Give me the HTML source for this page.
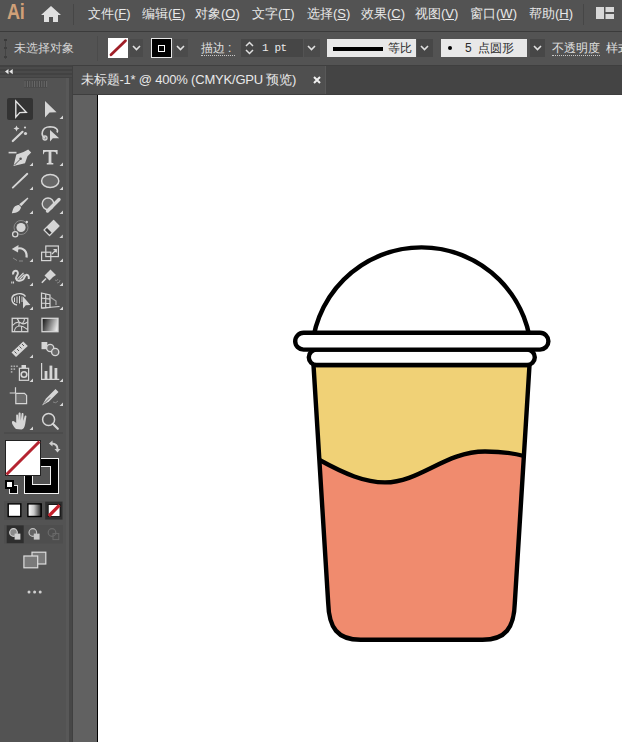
<!DOCTYPE html>
<html><head><meta charset="utf-8">
<style>
*{margin:0;padding:0;box-sizing:border-box}
html,body{width:622px;height:742px;overflow:hidden;background:#535353;font-family:"Liberation Sans",sans-serif;color:#e6e6e6}
.a{position:absolute}
#menubar{left:0;top:0;width:622px;height:31px;background:#535353}
#menuline{left:0;top:31px;width:622px;height:1px;background:#3b3b3b}
#ctrl{left:0;top:32px;width:622px;height:33px;background:#535353}
.mi{position:absolute;top:6px;font-size:13px;line-height:15px;color:#e8e8e8;white-space:nowrap}
.mi u{text-decoration:underline;text-underline-offset:1px}
#tabrow{left:326px;top:65px;width:296px;height:29px;background:#444444}
#tab{left:73px;top:65px;width:253px;height:29px;background:#4f4f4f}
#tabline{left:73px;top:94px;width:549px;height:1px;background:#3e3e3e}
#toolhdr{left:0;top:65px;width:72px;height:13px;background:repeating-linear-gradient(#424242 0 2px,#4a4a4a 2px 4px)}
#tools{left:0;top:78px;width:66px;height:664px;background:#535353}
#pbL{left:66px;top:78px;width:3px;height:664px;background:#585858}
#pbD{left:69px;top:78px;width:3px;height:664px;background:#474747}
#vline{left:72px;top:65px;width:1px;height:677px;background:#404040}
#paste{left:73px;top:95px;width:24px;height:647px;background:#616161}
#cvline{left:97px;top:95px;width:1px;height:647px;background:#000}
#canvas{left:98px;top:95px;width:524px;height:647px;background:#fff}
</style></head><body>
<div id="menubar" class="a"></div>
<div id="menuline" class="a"></div>
<div id="ctrl" class="a"></div>
<!-- Ai logo -->
<div class="a" style="left:6.5px;top:0px;font-size:22px;line-height:23px;color:#d0a078;font-weight:bold;letter-spacing:-0.3px;transform:scaleX(0.82);transform-origin:0 0">Ai</div>
<!-- home -->
<svg class="a" style="left:40px;top:5px" width="22" height="18" viewBox="0 0 22 18"><path d="M11 1 L21 10 L18 10 L18 17 L13 17 L13 12 L9 12 L9 17 L4 17 L4 10 L1 10 Z" fill="#e0e0e0"/></svg>
<div class="a" style="left:73px;top:4px;width:1px;height:21px;background:#464646"></div>
<div class="mi" style="left:88px">文件(<u>F</u>)</div>
<div class="mi" style="left:142px">编辑(<u>E</u>)</div>
<div class="mi" style="left:195px">对象(<u>O</u>)</div>
<div class="mi" style="left:252px">文字(<u>T</u>)</div>
<div class="mi" style="left:307px">选择(<u>S</u>)</div>
<div class="mi" style="left:361px">效果(<u>C</u>)</div>
<div class="mi" style="left:415px">视图(<u>V</u>)</div>
<div class="mi" style="left:470px">窗口(<u>W</u>)</div>
<div class="mi" style="left:529px">帮助(<u>H</u>)</div>
<div class="a" style="left:583px;top:4px;width:1px;height:21px;background:#464646"></div>
<svg class="a" style="left:595.5px;top:6.5px" width="19" height="13"><rect x="0" y="0" width="8" height="12" fill="#d8d8d8"/><rect x="9.5" y="0" width="8.5" height="5" fill="#d8d8d8"/><rect x="9.5" y="7" width="8.5" height="5" fill="#d8d8d8"/></svg>


<!-- control bar -->
<div class="a" style="left:4.5px;top:39px;width:1.5px;height:20px;background:#444"></div><div class="a" style="left:4px;top:39px;width:3px;height:2px;background:#3a3a3a"></div><div class="a" style="left:4px;top:47px;width:3px;height:1.5px;background:#3e3e3e"></div><div class="a" style="left:4px;top:56px;width:3px;height:2px;background:#3e3e3e"></div>
<div class="a" style="left:14px;top:41px;font-size:12px;line-height:14px;color:#d4d4d4">未选择对象</div>
<div class="a" style="left:97px;top:36px;width:1px;height:25px;background:#4b4b4b"></div>
<div class="a" style="left:108px;top:38px;width:20px;height:20px;background:#fff;overflow:hidden"><svg width="20" height="20"><line x1="3" y1="16.8" x2="17.5" y2="2.8" stroke="#a01f28" stroke-width="2.8" stroke-linecap="round"/></svg></div>
<div class="a" style="left:130px;top:39px;width:13px;height:18px;background:#4b4b4b"></div>
<svg class="a" style="left:131px;top:43px" width="11" height="10"><path d="M2 3 L5.5 6.5 L9 3" fill="none" stroke="#e0e0e0" stroke-width="1.6"/></svg>
<div class="a" style="left:151px;top:38px;width:21px;height:20px;background:#000;border:1px solid #e6e6e6"></div>
<div class="a" style="left:158px;top:44.5px;width:7px;height:7px;border:1.5px solid #fff;background:#000"></div>
<div class="a" style="left:174px;top:39px;width:14px;height:18px;background:#4b4b4b"></div>
<svg class="a" style="left:175px;top:43px" width="11" height="10"><path d="M2 3 L5.5 6.5 L9 3" fill="none" stroke="#e0e0e0" stroke-width="1.6"/></svg>
<div class="a" style="left:201px;top:41px;font-size:12px;line-height:14px;color:#e0e0e0;white-space:nowrap">描边<span style="margin-left:3px">:</span></div>
<div class="a" style="left:201px;top:55px;width:34px;height:1px;border-top:1px dotted #c8c8c8"></div>
<div class="a" style="left:241px;top:39px;width:17px;height:18px;background:#474747"></div>
<svg class="a" style="left:243px;top:39px" width="13" height="18"><path d="M3 7 L6.5 3.5 L10 7 M3 11 L6.5 14.5 L10 11" fill="none" stroke="#e0e0e0" stroke-width="1.5"/></svg>
<div class="a" style="left:258px;top:39px;width:45px;height:18px;background:#464646"></div>
<div class="a" style="left:262px;top:41px;font-family:'Liberation Mono',monospace;font-size:11px;line-height:14px;color:#eaeaea;letter-spacing:-0.4px">1 pt</div>
<div class="a" style="left:304px;top:39px;width:16px;height:18px;background:#4b4b4b"></div>
<svg class="a" style="left:306px;top:43px" width="11" height="10"><path d="M2 3 L5.5 6.5 L9 3" fill="none" stroke="#e0e0e0" stroke-width="1.6"/></svg>
<div class="a" style="left:327px;top:39px;width:89px;height:18px;background:#e8e8e8"></div>
<div class="a" style="left:333px;top:47px;width:50px;height:4px;background:#000"></div>
<div class="a" style="left:388px;top:41px;font-size:12px;line-height:14px;color:#2a2a2a">等比</div>
<div class="a" style="left:417px;top:39px;width:16px;height:18px;background:#474747"></div>
<svg class="a" style="left:419px;top:43px" width="11" height="10"><path d="M2 3 L5.5 6.5 L9 3" fill="none" stroke="#e0e0e0" stroke-width="1.6"/></svg>
<div class="a" style="left:441px;top:39px;width:86px;height:18px;background:#e8e8e8"></div>
<div class="a" style="left:447.5px;top:46px;width:4px;height:4px;border-radius:50%;background:#000"></div>
<div class="a" style="left:465px;top:41px;font-size:12px;line-height:14px;color:#2a2a2a">5&nbsp;&nbsp;点圆形</div>
<div class="a" style="left:530px;top:39px;width:15px;height:18px;background:#474747"></div>
<svg class="a" style="left:532px;top:43px" width="11" height="10"><path d="M2 3 L5.5 6.5 L9 3" fill="none" stroke="#e0e0e0" stroke-width="1.6"/></svg>
<div class="a" style="left:552px;top:41px;font-size:12px;line-height:14px;color:#e0e0e0;white-space:nowrap">不透明度</div>
<div class="a" style="left:552px;top:55px;width:48px;height:1px;border-top:1px dotted #c8c8c8"></div>
<div class="a" style="left:606px;top:41px;font-size:12px;line-height:14px;color:#e0e0e0;white-space:nowrap">样式</div>
<div id="tabrow" class="a"></div>
<div id="tab" class="a"></div>
<div class="a" style="left:81px;top:72px;font-size:13px;line-height:15px;color:#e8e8e8;white-space:nowrap;letter-spacing:-0.2px">未标题-1* @ 400% (CMYK/GPU 预览)</div>
<svg class="a" style="left:313px;top:76px" width="8" height="8"><path d="M1 1 L7 7 M7 1 L1 7" stroke="#f0f0f0" stroke-width="2"/></svg>

<div id="toolhdr" class="a"></div>
<div id="tools" class="a"></div>
<div id="pbL" class="a"></div>
<div id="pbD" class="a"></div>
<div id="vline" class="a"></div>
<div id="tabline" class="a"></div>
<div class="a" style="left:73px;top:65px;width:549px;height:1px;background:#3f3f3f"></div>
<div class="a" style="left:325px;top:66px;width:1px;height:28px;background:#585858"></div>
<div id="paste" class="a"></div>

<svg class="a" style="left:0;top:0" width="72" height="742" viewBox="0 0 72 742">
<!-- header -->
<path d="M5,71.5 L8.5,69 L8.5,74.2 Z M9.2,71.5 L12.7,69 L12.7,74.2 Z" fill="#e8e8e8"/>
<rect x="24" y="80.5" width="23" height="7" fill="#474747"/><g stroke="#6c6c6c" stroke-width="1"><line x1="25.0" y1="81" x2="25.0" y2="87"/><line x1="27.4" y1="81" x2="27.4" y2="87"/><line x1="29.8" y1="81" x2="29.8" y2="87"/><line x1="32.2" y1="81" x2="32.2" y2="87"/><line x1="34.6" y1="81" x2="34.6" y2="87"/><line x1="37.0" y1="81" x2="37.0" y2="87"/><line x1="39.4" y1="81" x2="39.4" y2="87"/><line x1="41.8" y1="81" x2="41.8" y2="87"/><line x1="44.2" y1="81" x2="44.2" y2="87"/><line x1="46.6" y1="81" x2="46.6" y2="87"/></g>
<!-- selected bg -->
<rect x="7" y="98" width="26" height="22" rx="2" fill="#333333"/>
<!-- selection -->
<path d="M15.8,101 L15.8,117.2 L19.8,112.6 L26.3,112.3 Z" fill="none" stroke="#e2e2e2" stroke-width="1.4" stroke-linejoin="miter"/>
<!-- direct selection -->
<path d="M45,101 L45,117.5 L49.5,112.6 L56.6,112.3 Z" fill="#d6d6d6"/>
<path d="M63,115.5 L63,119 L59.5,119 Z" fill="#d6d6d6"/>
<!-- magic wand -->
<line x1="12.8" y1="141" x2="22.5" y2="131.8" stroke="#d6d6d6" stroke-width="2.2" stroke-linecap="round"/>
<path d="M16.5,125.5 L17.4,127.6 L19.5,128.5 L17.4,129.4 L16.5,131.5 L15.6,129.4 L13.5,128.5 L15.6,127.6 Z" fill="#d6d6d6"/>
<circle cx="25.5" cy="133.5" r="1.6" fill="#d6d6d6"/><circle cx="25" cy="127.5" r="1.1" fill="#d6d6d6"/>
<!-- lasso -->
<path d="M45.5,138.5 C40,135.5 41.5,127 50,126.8 C56.5,126.8 58.5,130 57,132.5" fill="none" stroke="#d6d6d6" stroke-width="1.6"/>
<circle cx="45" cy="138" r="2" fill="none" stroke="#d6d6d6" stroke-width="1.3"/>
<path d="M50,130 L50,141.5 L52.8,138.3 L59.2,138.2 Z" fill="#d6d6d6"/>
<!-- pen -->
<line x1="8.6" y1="152.6" x2="16.5" y2="152.6" stroke="#d6d6d6" stroke-width="1.6"/>
<path d="M28.2,149.5 L31.2,152.5 L27.5,156.2 L25,163.2 L13.5,166 L16.3,154.5 L23.5,152 Z" fill="#d6d6d6"/>
<path d="M14.5,165 L20,159.5" stroke="#535353" stroke-width="1"/><circle cx="20.6" cy="158.8" r="1.3" fill="#535353"/>
<path d="M33,162.5 L33,166 L29.5,166 Z" fill="#d6d6d6"/>
<!-- type -->
<path d="M43,150 H57.6 V154.2 H56.4 Q56.2,151.8 54,151.8 H51.4 V162.4 Q51.4,163 53.3,163 V164.4 H46.8 V163 Q48.6,163 48.6,162.4 V151.8 H46 Q43.8,151.8 43.6,154.2 H43 Z" fill="#d6d6d6"/>
<path d="M63,162.5 L63,166 L59.5,166 Z" fill="#d6d6d6"/>
<!-- line -->
<line x1="12.8" y1="187.6" x2="27.3" y2="173.8" stroke="#d6d6d6" stroke-width="1.9" stroke-linecap="round"/>
<path d="M33,186.5 L33,190 L29.5,190 Z" fill="#d6d6d6"/>
<!-- ellipse -->
<ellipse cx="50.2" cy="181" rx="8.6" ry="6.6" fill="#676767" stroke="#d6d6d6" stroke-width="1.5"/>
<path d="M63,186.5 L63,190 L59.5,190 Z" fill="#d6d6d6"/>
<!-- paintbrush -->
<path d="M27.6,197.5 L28.4,198.4 L21.3,206.2 L19.2,204.2 Z" fill="#d6d6d6"/>
<path d="M19,205 L21,207 C20.5,211 17,213.3 11.8,213.2 C12.8,211 12.8,207.8 15,206.3 C16.5,205.3 18,205 19,205 Z" fill="#d6d6d6"/>
<path d="M33,210.5 L33,214 L29.5,214 Z" fill="#d6d6d6"/>
<!-- blob brush -->
<circle cx="48" cy="203.8" r="5.8" fill="#686868" stroke="#d6d6d6" stroke-width="1.4"/>
<line x1="47.5" y1="211" x2="59" y2="199.5" stroke="#d6d6d6" stroke-width="3.4" stroke-linecap="round"/>
<path d="M63,210.5 L63,214 L59.5,214 Z" fill="#d6d6d6"/>
<!-- shaper -->
<circle cx="21" cy="227.5" r="7" fill="none" stroke="#8a8a8a" stroke-width="1"/>
<circle cx="21" cy="227.5" r="4.6" fill="#d6d6d6"/>
<circle cx="15.2" cy="234.2" r="2.6" fill="#535353" stroke="#d6d6d6" stroke-width="1.3"/>
<circle cx="26.8" cy="222" r="1.2" fill="#d6d6d6"/>
<!-- eraser -->
<path d="M53.6,220.5 L59,226 L49.5,235.5 L44,230 Z" fill="#3e3e3e" stroke="#d6d6d6" stroke-width="1.2" stroke-linejoin="round"/>
<path d="M53.6,220.5 L59,226 L52,233 L46.5,227.5 Z" fill="#d6d6d6"/>
<path d="M62.8,234.5 L62.8,238 L59.3,238 Z" fill="#d6d6d6"/>
<!-- rotate -->
<path d="M16,249.5 C20.5,246.5 27.5,249.5 26.5,257.5" fill="none" stroke="#d6d6d6" stroke-width="2.2"/>
<path d="M11.8,249 L18.5,245 L18,252.5 Z" fill="#d6d6d6"/>
<path d="M13,258 L17,260.5 M19,261 L23,261" stroke="#8a8a8a" stroke-width="1"/>
<path d="M33,258.5 L33,262 L29.5,262 Z" fill="#d6d6d6"/>
<!-- scale -->
<rect x="45.8" y="246" width="12.6" height="10.6" fill="none" stroke="#d6d6d6" stroke-width="1.2"/>
<rect x="41.6" y="252.2" width="9.2" height="8.4" fill="none" stroke="#d6d6d6" stroke-width="1.2"/>
<path d="M52,254 L56,250 M53.5,249.6 L56.3,249.6 L56.3,252.4" fill="none" stroke="#d6d6d6" stroke-width="1.2"/>
<path d="M63,258.5 L63,262 L59.5,262 Z" fill="#d6d6d6"/>
<!-- warp -->
<path d="M13.2,274.5 C12.5,271 16.5,269.5 17.8,272.3 C18.8,274.5 15.5,276.5 16,278.5 C16.5,281 20.5,281.5 23,279.5 C25,277.8 24.5,275 26.5,274.8 C28.3,274.6 29,276.5 28.8,279" fill="none" stroke="#d6d6d6" stroke-width="2"/>
<path d="M17.5,278.8 L23.5,272.8 M19.5,279.5 L24.5,274.5" stroke="#d6d6d6" stroke-width="1.2"/>
<path d="M11.8,281.5 L11.8,283.5 M13.5,281.5 L13.5,283.5" stroke="#d6d6d6" stroke-width="1.1"/>
<path d="M33,286 L33,282.5 L29.5,286 Z" fill="#d6d6d6"/>
<!-- puppet pin -->
<path d="M50.5,269.5 L56,275 L53,277 L49.5,280.5 L44.5,275.5 L48,272 Z" fill="#d6d6d6"/>
<line x1="46" y1="278.5" x2="41.8" y2="282.7" stroke="#d6d6d6" stroke-width="1.6"/>
<path d="M55,280 Q57,282 58,279 M57,283 Q60,283 60,280" fill="none" stroke="#8a8a8a" stroke-width="0.9"/>
<path d="M63,282.5 L63,286 L59.5,286 Z" fill="#d6d6d6"/>
<!-- free transform -->
<path d="M17,305 C11,304 10,296 15.5,294.5 C19,293 23.5,293.5 25.5,296.5" fill="none" stroke="#d6d6d6" stroke-width="1.4"/>
<path d="M14.5,297.5 L14.5,302 M17,296.5 L17,303 M19.5,296 L19.5,303.5 M22,296.5 L22,302" stroke="#d6d6d6" stroke-width="1"/>
<path d="M23,296.5 L23,308.6 L25.8,305.3 L30.4,305 Z" fill="#d6d6d6"/>
<path d="M33,306.5 L33,310 L29.5,310 Z" fill="#d6d6d6"/>
<!-- perspective grid -->
<path d="M41.5,293 L50,295 L50,307.5 L41.5,308 Z M41.5,298 L50,299.2 M41.5,303 L50,303.5 M45.7,294 L45.7,307.7" fill="none" stroke="#d6d6d6" stroke-width="1.2"/>
<path d="M50,297 L56,301 L56,305" fill="none" stroke="#a8a8a8" stroke-width="1.2"/>
<path d="M42,308 L59.5,306.5" stroke="#d6d6d6" stroke-width="1.2"/>
<path d="M63,306.5 L63,310 L59.5,310 Z" fill="#d6d6d6"/>
<!-- mesh -->
<rect x="12.2" y="318.3" width="15.6" height="13.4" fill="none" stroke="#d6d6d6" stroke-width="1.3"/>
<path d="M12.5,325.5 C15.5,322 18.5,321.5 21,323 C23,324.5 25,324 27.5,322 M14.5,331.5 C14.5,328 17,326 20,326 C23,326 25.5,328 27.5,329.5 M17,318.5 C19.5,321 19.5,324 18.5,326.5 M21.5,326 C21.5,328.5 22,330 21.5,331.5 M24.5,318.5 C24.5,320.5 23.5,322.5 22.5,323.5" fill="none" stroke="#d6d6d6" stroke-width="1.1"/>
<!-- gradient -->
<defs><linearGradient id="gr" x1="0" y1="0.2" x2="1" y2="0.5"><stop offset="0" stop-color="#151515"/><stop offset="1" stop-color="#e6e6e6"/></linearGradient>
<linearGradient id="gr2" x1="0" y1="0" x2="1" y2="0"><stop offset="0" stop-color="#ffffff"/><stop offset="0.45" stop-color="#c9c9c9"/><stop offset="1" stop-color="#1e1e1e"/></linearGradient></defs>
<rect x="42" y="318.3" width="16" height="13.4" fill="url(#gr)" stroke="#d6d6d6" stroke-width="1.3"/>
<!-- measure -->
<path d="M23.2,341.5 L27.8,346 L16,357 L11.5,352.5 Z" fill="#d6d6d6"/>
<path d="M14.5,351.5 L16.5,353.5 M17,349 L19,351 M19.5,346.5 L21.5,348.5 M22,344 L24,346" stroke="#535353" stroke-width="1"/>
<path d="M33,354.5 L33,358 L29.5,358 Z" fill="#d6d6d6"/>
<!-- blend -->
<rect x="41.5" y="342" width="5.8" height="7.2" fill="#d6d6d6"/>
<circle cx="50.2" cy="348" r="3.6" fill="#6a6a6a" stroke="#d6d6d6" stroke-width="1.4"/>
<circle cx="55.2" cy="352" r="3.6" fill="#6a6a6a" stroke="#d6d6d6" stroke-width="1.4"/>
<!-- symbol sprayer -->
<g fill="#b0b0b0"><rect x="10.8" y="365.5" width="1.6" height="1.6"/><rect x="13.5" y="365.5" width="1.6" height="1.6"/><rect x="16.2" y="365.5" width="1.6" height="1.6"/><rect x="10.8" y="368.3" width="1.6" height="1.6"/><rect x="13.5" y="368.3" width="1.6" height="1.6"/><rect x="10.8" y="371.1" width="1.6" height="1.6"/></g>
<rect x="21.5" y="365" width="4.5" height="3" fill="#d6d6d6"/>
<rect x="19.4" y="368.3" width="9.2" height="12" fill="none" stroke="#d6d6d6" stroke-width="1.2"/>
<circle cx="24" cy="374.5" r="2.8" fill="none" stroke="#d6d6d6" stroke-width="1.6"/>
<path d="M33,378.5 L33,382 L29.5,382 Z" fill="#d6d6d6"/>
<!-- column graph -->
<path d="M41.6,363 L41.6,379.4 L59.3,379.4" fill="none" stroke="#d6d6d6" stroke-width="1.2"/>
<rect x="44.6" y="371" width="2.8" height="8" fill="#d6d6d6"/><rect x="49.5" y="365.6" width="2.8" height="13.4" fill="#d6d6d6"/><rect x="54.5" y="368" width="2.8" height="11" fill="#d6d6d6"/>
<path d="M63,378.5 L63,382 L59.5,382 Z" fill="#d6d6d6"/>
<!-- artboard -->
<path d="M15.5,387.3 L15.5,393 M9.7,393 L15.5,393" stroke="#d6d6d6" stroke-width="1.2"/>
<path d="M15.8,393.3 L24.5,393.3 L26.6,395.4 L26.6,403.6 L15.8,403.6 Z" fill="#6c6c6c" stroke="#d6d6d6" stroke-width="1.2"/>
<!-- slice / knife -->
<path d="M55.5,389 L58.5,392 L49,401.5 L42,405.5 L46,398.5 Z" fill="#d6d6d6"/>
<path d="M44,403.5 L50,397.5" stroke="#535353" stroke-width="0.9"/>
<path d="M53,402 Q56,404 58,401" fill="none" stroke="#8a8a8a" stroke-width="0.9"/>
<path d="M63,402.5 L63,406 L59.5,406 Z" fill="#d6d6d6"/>
<!-- hand -->
<path d="M16,429 C13.5,426.5 11,423 12.3,421.3 C13.4,420.3 15,421.8 16.2,423 L16.2,415.5 C16.2,414.2 18,414.2 18,415.5 L18,420.5 L18.6,413.5 C18.6,412.2 20.6,412.2 20.6,413.5 L20.8,420.5 L21.6,414 C21.6,412.8 23.5,412.8 23.5,414 L23.3,421 L24.6,416.2 C24.8,415 26.5,415.2 26.4,416.5 L25.2,424 C24.6,427.5 23.5,429.4 21.5,429.4 Z" fill="#d6d6d6"/>
<path d="M33,426.5 L33,430 L29.5,430 Z" fill="#d6d6d6"/>
<!-- zoom -->
<circle cx="48.6" cy="419.5" r="6" fill="none" stroke="#d6d6d6" stroke-width="1.5"/>
<line x1="52.8" y1="423.8" x2="57.8" y2="428.8" stroke="#d6d6d6" stroke-width="2.2" stroke-linecap="round"/>
<!-- separator -->
<line x1="4" y1="433" x2="63" y2="433" stroke="#474747" stroke-width="1"/>
<!-- fill/stroke -->
<g shape-rendering="crispEdges">
<rect x="24" y="458" width="35" height="36" fill="#f2f2f2"/>
<rect x="25" y="459" width="33" height="34" fill="#000"/>
<rect x="32" y="466" width="19" height="19" fill="#f2f2f2"/>
<rect x="33" y="467" width="17" height="17" fill="#535353"/>
<rect x="5" y="440" width="36" height="36" fill="#222"/>
<rect x="6" y="441" width="34" height="34" fill="#ffffff"/>
</g>
<line x1="6.5" y1="474.5" x2="39.5" y2="441.5" stroke="#b52430" stroke-width="3"/>
<!-- swap -->
<path d="M51.5,443.5 C55.5,443.5 57.5,446 57.5,449" fill="none" stroke="#cfcfcf" stroke-width="2"/>
<path d="M49,443.5 L52.5,440.5 L52.5,446.5 Z M57.5,452.5 L54.5,449 L60.5,449 Z" fill="#cfcfcf"/>
<!-- default -->
<g shape-rendering="crispEdges"><rect x="9" y="485" width="8" height="8" fill="#000" stroke="#e6e6e6" stroke-width="1"/>
<rect x="6" y="481" width="7" height="7" fill="#fff" stroke="#000" stroke-width="1.5"/></g>
<!-- color mode row -->
<rect x="4" y="501" width="59" height="19" fill="#4e4e4e"/>
<rect x="45.2" y="501.7" width="17.2" height="17.8" fill="#2e2e2e"/>
<rect x="8.2" y="503.9" width="12.6" height="12.6" fill="#fff" stroke="#000" stroke-width="1.4"/>
<rect x="27.9" y="503.9" width="13.3" height="12.6" fill="url(#gr2)" stroke="#000" stroke-width="1.4"/>
<rect x="48.2" y="504.6" width="11.8" height="11.9" fill="#fff" stroke="#000" stroke-width="0.8"/>
<line x1="48.8" y1="516" x2="59.5" y2="505.2" stroke="#c41f2a" stroke-width="3.2"/>
<!-- draw modes row -->
<rect x="4" y="525" width="59" height="18.5" fill="#4e4e4e"/>
<rect x="6.7" y="525.4" width="17" height="17.8" fill="#2e2e2e"/>
<circle cx="13.5" cy="532.5" r="3.8" fill="#8a8a8a" stroke="#d0d0d0" stroke-width="1.2"/>
<rect x="14.6" y="533.6" width="5.8" height="6" fill="#d0d0d0"/>
<circle cx="32.8" cy="532.5" r="3.8" fill="#646464" stroke="#c0c0c0" stroke-width="1.2"/>
<rect x="33.8" y="533.6" width="5.8" height="6" fill="#c8c8c8"/>
<circle cx="52" cy="532.5" r="3.8" fill="none" stroke="#6a6a6a" stroke-width="1.2"/>
<rect x="53" y="533.6" width="5.8" height="6" fill="none" stroke="#6a6a6a" stroke-width="1"/>
<!-- screen mode -->
<rect x="32" y="552.2" width="13.8" height="11.8" fill="#7a7a7a" stroke="#dcdcdc" stroke-width="1.2"/>
<rect x="23.9" y="556" width="13.8" height="11.8" fill="#7a7a7a" stroke="#dcdcdc" stroke-width="1.2"/>
<!-- more -->
<circle cx="29" cy="592" r="1.5" fill="#d0d0d0"/><circle cx="34.6" cy="592" r="1.5" fill="#d0d0d0"/><circle cx="40.2" cy="592" r="1.5" fill="#d0d0d0"/>
</svg>
<div id="cvline" class="a"></div>
<div id="canvas" class="a"></div>


<svg class="a" style="left:0;top:0" width="622" height="742" viewBox="0 0 622 742">
<defs><clipPath id="bc"><path d="M313.50,365 L328.20,603 C328.90,628 337.50,639.8 360.50,639.8 L482.50,639.8 C505.50,639.8 514.10,628 514.80,603 L529.50,365 Z"/></clipPath></defs>
<path d="M311.5,357.4 A110,110 0 0 1 531.5,357.4 Z" fill="#fff" stroke="#000" stroke-width="4.4"/>
<path d="M313.50,365 L328.20,603 C328.90,628 337.50,639.8 360.50,639.8 L482.50,639.8 C505.50,639.8 514.10,628 514.80,603 L529.50,365 Z" fill="#F0D176"/>
<path d="M310,458 L319.5,460 C345,474 365,482.4 385,482.4 C420,482.4 445,451.5 485,451.5 C505,451.5 515,453.5 524,456 L540,459 L540,660 L300,660 Z" fill="#F08B6E" clip-path="url(#bc)"/>
<path d="M310,458 L319.5,460 C345,474 365,482.4 385,482.4 C420,482.4 445,451.5 485,451.5 C505,451.5 515,453.5 524,456 L540,459" fill="none" stroke="#000" stroke-width="4.4" clip-path="url(#bc)"/>
<path d="M313.50,365 L328.20,603 C328.90,628 337.50,639.8 360.50,639.8 L482.50,639.8 C505.50,639.8 514.10,628 514.80,603 L529.50,365 Z" fill="none" stroke="#000" stroke-width="4.4" stroke-linejoin="round"/>
<rect x="308.8" y="349.6" width="225.99999999999994" height="15.4" rx="7.7" fill="#fff" stroke="#000" stroke-width="4.4"/>
<rect x="295.2" y="332.8" width="253.2" height="16.8" rx="8.4" fill="#fff" stroke="#000" stroke-width="4.4"/>
</svg>
</body></html>
